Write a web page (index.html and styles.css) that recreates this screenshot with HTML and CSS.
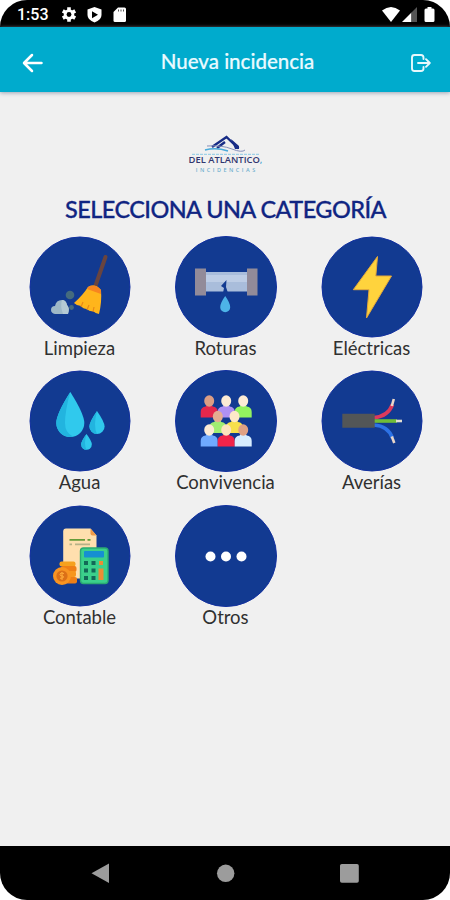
FILE: index.html
```
<!DOCTYPE html>
<html lang="es">
<head>
<meta charset="utf-8">
<title>Nueva incidencia</title>
<link rel="stylesheet" href="styles.css">
</head>
<body>
<div class="phone">
  <div class="status">
    <span class="clock">1:53</span>
    <svg class="status-left" width="70" height="20" viewBox="0 0 70 20">
      <g transform="translate(9 10.5)" fill="#fff"><circle r="5.2"/><g stroke="#fff" stroke-width="3.6"><path d="M0-7.2V7.2M-6.2-3.6L6.2 3.6M-6.2 3.6L6.2-3.6"/></g><circle r="2.4" fill="#000"/></g>
      <path fill="#fff" d="M34.500 3l7 2.600v5.400q0 5-7 7.500-7-2.500-7-7.500V5.600z"/><path fill="#000" d="M32 7.200l6 3.500-6 3.600z"/>
      <path fill="#fff" d="M58 3.500h6.500q1.500 0 1.500 1.500v11.500q0 1.500-1.500 1.500h-9.500q-1.500 0-1.500-1.500V8z"/><path stroke="#555" d="M58.500 5.500v2M61 5.500v2M63.500 5.500v2"/>
    </svg>
    <svg class="status-right" width="56" height="20" viewBox="0 0 56 20">
      <path fill="#fff" d="M0 6.500Q9-.500 18 6.500L9 18z"/>
      <path fill="#fff" d="M20 18L29.500 8.500V18z"/><path fill="#555" d="M29.500 8.500L35 3v15h-5.500z"/>
      <path fill="#fff" d="M45.500 3h4v1.500H51q1.500 0 1.500 1.500v10.500q0 1.500-1.500 1.500h-7q-1.500 0-1.500-1.500V6q0-1.500 1.500-1.500h1.500z"/>
    </svg>
  </div>
  <header class="bar">
    <svg width="22" height="20" viewBox="0 0 22 20" fill="none" stroke="#fff" stroke-width="2.500" stroke-linecap="round" stroke-linejoin="round"><path d="M19.500 10H2.500M10 2L2 10l8 8"/></svg>
    <h1>Nueva incidencia</h1>
    <svg width="21" height="18" viewBox="0 0 21 18" fill="none" stroke="#e7f8fc" stroke-width="1.900" stroke-linecap="round" stroke-linejoin="round"><path d="M13.500 5V3.500Q13.500 1 11 1H4.500Q2 1 2 3.500v11Q2 17 4.500 17H11q2.500 0 2.500-2.500V13M8 9h11M16 5.200L19.800 9 16 12.800"/></svg>
  </header>
  <main>
    <div class="logo">
      <svg width="74" height="20" viewBox="0 0 74 20" fill="none">
        <path d="M23 12L37.500 2l12 11.500M36 7l-8 6" stroke="#172c86" stroke-width="2.400"/><path d="M42 4l8 7v3h-4z" fill="#172c86"/>
        <path d="M18 11q15-1 25 3t13 1" stroke="#8590bb"/><path d="M16 15q11-3 23 1" stroke="#48aada" stroke-width="1.600"/>
        <path d="M3 19.300h68" stroke="#9fd1e7" stroke-width="1.200" stroke-dasharray="3 1"/>
      </svg>
      <p class="brand">DEL ATLANTICO<span>,</span></p>
      <p class="tagline">INCIDENCIAS</p>
    </div>
    <h2>SELECCIONA UNA CATEGORÍA</h2>
    <div class="grid">
      <div class="item">
        <svg viewBox="0 0 102 102"><circle class="disc" cx="51" cy="51" r="50"/>
          <path d="M76.500 21L66 51" stroke="#69443f" stroke-width="4" stroke-linecap="round"/>
          <path d="M59 51q7-4 13 3 1 12-2 24-3 0-6-3-3 1-6-2-4 0-6-3-4 0-7-3 9-8 14-16z" fill="#ffb51b"/>
          <path d="M59 51q7-4 13 3v4l-14-5z" fill="#f78520"/>
          <path d="M54 66l-2 5M60 69l-2 5M65 71l-1 5" stroke="#e88917" stroke-width="1.200"/>
          <circle cx="41" cy="59" r="4.300" fill="#456b7e"/><circle cx="42.500" cy="71.500" r="2.400" fill="#456b7e"/>
          <path d="M26 78q-4-1-4-4 0-4 4-4 1-6 7-6 4 0 5 5 3 3 1 9z" fill="#9eb8c7"/><path d="M33 64q4 0 5 5 3 3 1 9h-5q-3-8-1-14z" fill="#b5cad4"/>
        </svg><span>Limpieza</span></div>
      <div class="item">
        <svg viewBox="0 0 102 102"><circle class="disc" cx="51" cy="51" r="50.500"/>
          <path d="M31 36h41v19.500H31z" fill="#a9bddb"/><path d="M31 39h41v7H31z" fill="#bdcde5"/>
          <path d="M20 32.500h11v27H20zM72 32.500h10.500v27H72z" fill="#928b99"/>
          <path d="M51.500 44l-5.500 6 3 2-1 5h5l-2-6 .500-7z" fill="#123a91"/>
          <path d="M50.200 60q-5 7-5 11.200a5 5 0 0 0 10 0q0-4.200-5-11.200z" fill="#4db3e8"/>
        </svg><span>Roturas</span></div>
      <div class="item">
        <svg viewBox="0 0 102 102"><circle class="disc" cx="51" cy="51" r="50"/>
          <path d="M56.500 20.500L32.300 53.700H48L45.500 82l25-42H54.800z" fill="#ffd33d" stroke="#e4a83a" stroke-width="1" stroke-linejoin="round"/>
        </svg><span>Eléctricas</span></div>
      <div class="item">
        <svg viewBox="0 0 102 102"><circle class="disc" cx="51" cy="51" r="50"/>
          <g fill="#30c9ed"><path d="M41.300 22q-14 22-14 31a14 14 0 0 0 28 0q0-9-14-31z"/><path d="M68 41q-7.600 11-7.600 15.500a7.600 7.600 0 0 0 15.200 0Q75.600 52 68 41z"/><path d="M57.500 64q-5.300 7-5.300 10.500a5.300 5.300 0 0 0 10.600 0Q62.800 71 57.500 64z"/></g>
          <g fill="#22b4df"><path d="M41.300 22q-14 22-14 31a14 14 0 0 0 17 13.700Q36 63 36 53q0-12 5.300-31z"/><path d="M68 41q-7.600 11-7.600 15.500A7.600 7.600 0 0 0 68 64q-4-8 0-23z"/><path d="M57.500 64q-5.300 7-5.300 10.500a5.300 5.300 0 0 0 5.300 5.300q-3-6 0-15.800z"/></g>
        </svg><span>Agua</span></div>
      <div class="item">
        <svg viewBox="0 0 102 102"><circle class="disc" cx="51" cy="51" r="50.500"/>
          <defs><path id="torso" d="M-8.500 16.500V11q0-5 5-5.500L-2 3h4l1.500 2.500q5 .5 5 5.500v5.500z"/><ellipse id="head" rx="5" ry="5.700"/></defs>
          <g transform="translate(34.200 31)"><use href="#torso" fill="#e5274c"/><use href="#head" fill="#dc9d84"/></g>
          <g transform="translate(51.200 31)"><use href="#torso" fill="#af91f3"/><use href="#head" fill="#fcebd5"/></g>
          <g transform="translate(68.200 31)"><use href="#torso" fill="#93f35f"/><use href="#head" fill="#fcebd5"/></g>
          <g transform="translate(42.800 46.500)"><use href="#torso" fill="#a0ed72"/><use href="#head" fill="#e5ad91"/></g>
          <g transform="translate(59.500 46.500)"><use href="#torso" fill="#f7e04c"/><use href="#head" fill="#fde8c8"/></g>
          <g transform="translate(34.200 60)"><use href="#torso" fill="#70aaff"/><use href="#head" fill="#fcebd5"/></g>
          <g transform="translate(51.200 60)"><use href="#torso" fill="#f12449"/><use href="#head" fill="#fde3bd"/></g>
          <g transform="translate(68.200 60)"><use href="#torso" fill="#d7edff"/><use href="#head" fill="#dfa184"/></g>
        </svg><span>Convivencia</span></div>
      <div class="item">
        <svg viewBox="0 0 102 102"><circle class="disc" cx="51" cy="51" r="50"/>
          <g fill="none" stroke-width="3.600"><path d="M53 47.500q14-1 18.500-13" stroke="#dc3a5c"/><path d="M70.800 36l2-7" stroke="#ead7c9" stroke-width="2.600"/>
          <path d="M53 51h23" stroke="#70bd38"/><path d="M75 51h6" stroke="#e2ded1" stroke-width="2.600"/>
          <path d="M53 55q14 1 18.500 13" stroke="#2d72e5"/><path d="M70.800 66.500l2.500 6.500" stroke="#ead7c9" stroke-width="2.600"/></g>
          <path d="M21.300 43.700h32.400v14H21.300z" fill="#535657"/>
        </svg><span>Averías</span></div>
      <div class="item">
        <svg viewBox="0 0 102 102"><circle class="disc" cx="51" cy="51" r="50"/>
          <path d="M37 23.500h24.500l6 7v43H34.200v-47q0-3 2.800-3z" fill="#ffdfae"/><path d="M61.500 23.500v5q0 2 2 2h4z" fill="#ef9a47"/>
          <path d="M40.500 34.800H56M58.500 34.800h3" stroke="#659b38" stroke-width="1.800"/><path d="M40.500 39.300H43M46 39.300h15" stroke="#b7b287" stroke-width="1.800"/>
          <rect x="30.500" y="56.500" width="16" height="5" rx="2" fill="#f6a11e"/><rect x="32" y="61" width="15.500" height="6" rx="2" fill="#ef7f16"/><rect x="31" y="66" width="16" height="6" rx="2" fill="#f7961d"/><rect x="32" y="72" width="16" height="6.500" rx="2" fill="#ef7f16"/>
          <circle cx="33" cy="71" r="9" fill="#f99421"/><circle cx="33" cy="71" r="5.600" fill="#dc7017"/><path d="M35 68.500q-4-1.500-4 .8t3 1.700q2 2-3 2.300M33 67v8" fill="none" stroke="#ffad3c"/>
          <rect x="51.500" y="43" width="27.500" height="35.500" rx="3" fill="#3bd08b" stroke="#2baa72" stroke-width="1.400"/><rect x="55" y="46" width="20" height="6.500" rx="1" fill="#168fd2"/>
          <path d="M55 56h4v4h-4zM62.500 56h4v4h-4zM55 63.500h4v4h-4zM62.500 63.500h4v4h-4zM55 71h4v4h-4zM62.500 71h4v4h-4z" fill="#126957"/><path d="M70 56h4v4h-4zM69.500 63.500h5V75h-5z" fill="#ed8c34"/>
        </svg><span>Contable</span></div>
      <div class="item">
        <svg viewBox="0 0 102 102"><circle class="disc" cx="51" cy="51" r="50.500"/>
          <g fill="#fff"><circle cx="35.500" cy="51.500" r="5"/><circle cx="51" cy="51.500" r="5"/><circle cx="66.500" cy="51.500" r="5"/></g>
        </svg><span>Otros</span></div>
    </div>
  </main>
  <nav>
    <svg width="450" height="54" viewBox="0 0 450 54" fill="#9c9c9c"><path d="M91.500 27.200L109 17.500v19.400z"/><circle cx="225.700" cy="27.300" r="8.700"/><rect x="340" y="18" width="18.800" height="18.800" rx="1.800"/></svg>
  </nav>
</div>
</body>
</html>
```
FILE: styles.css
```
* { box-sizing: border-box; }
body { margin: 0; background: #fff; font-family: Lato, sans-serif; }
h1, h2, p { margin: 0; }
svg { display: block; flex: none; }
.phone { width: 450px; height: 900px; display: flex; flex-direction: column; overflow: hidden; border-radius: 27px; background: #f0f0f0; }
.status { height: 27px; flex: none; background: #000; display: flex; align-items: flex-start; padding: 4px 12px 0 17px; }
.clock { font: 500 16px/22px Roboto, sans-serif; color: #fff; width: 43px; white-space: nowrap; }
.status-right { margin-left: auto; }
.bar { height: 65px; flex: none; background: #00abcd; display: flex; align-items: center; padding: 6px 19px 0 22px; box-shadow: 0 1px 4px #9ba5b5; }
.bar h1 { flex: 1; text-align: center; padding-left: 21px; font-size: 20.500px; line-height: 26px; font-weight: 500; color: #eafaff; margin-top: -4px; -webkit-text-stroke: .2px #eafaff; }
main { flex: 1; }
.logo { display: flex; flex-direction: column; align-items: center; padding: 43px 0 0 1px; height: 101px; }
.brand { font: 600 9.400px/13px "Open Sans", sans-serif; color: #31366f; white-space: nowrap; margin-top: -2px; }
.brand span { color: #42a4d0; }
.tagline { font: 600 5.500px/8px "Open Sans", sans-serif; color: #71b0cf; letter-spacing: 2.500px; margin-right: -2.500px; }
h2 { text-align: center; font-size: 23.500px; line-height: 32px; font-weight: 500; color: #102582; letter-spacing: -.56px; padding-left: 1px; white-space: nowrap; -webkit-text-stroke: .3px #102582; }
.grid { display: grid; grid-template-columns: repeat(3, 146px); grid-auto-rows: 134.500px; padding: 10.500px 0 0 6.500px; }
.item { display: flex; flex-direction: column; align-items: center; }
.item svg { width: 102px; height: 102px; }
.disc { fill: #123a91; stroke: #1230a0; stroke-width: 1; }
.item span { font-size: 18.500px; line-height: 22px; margin-top: -1px; color: #303030; }
nav { height: 54px; flex: none; background: #000; }
```
